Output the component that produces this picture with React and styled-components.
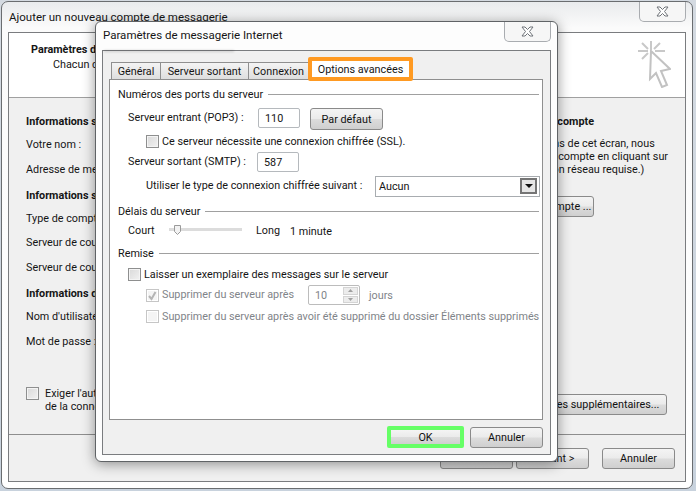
import React from 'react';
import styled, { createGlobalStyle } from 'styled-components';

const GlobalStyle = createGlobalStyle`
    html, body {
        margin: 0;
        padding: 0;
    }
    body {
        font-family: Roboto, "Noto Sans", sans-serif;
        font-size: 10.8px;
        color: #151515;
    }
`;

const CloseIcon = () => (
    <svg width="13" height="11" viewBox="0 0 13 11">
        <path d="M1 1h3l2.500 2.500L9 1h3L8.500 5.500 12 10H9L6.500 7.500 4 10H1l3.500-4.500z" fill="#fff" stroke="#6f7378" strokeWidth="1" />
    </svg>
);

const ClickIcon = () => (
    <svg width="33" height="47" viewBox="0 0 33 47" fill="none">
        <path d="M13 10l19 18-9 2 6 14-5 2-6-14-6 6z" fill="#fff" stroke="#c2c2c2" strokeWidth="2" />
        <path d="M13 0v9M0 10h10M4 2l6 6M22 2l-6 6M4 18l6-6M17 10h10" stroke="#c8c8c8" strokeWidth="2" />
    </svg>
);

const Caret = () => (
    <svg width="8" height="4" viewBox="0 0 8 4">
        <path d="M0 0h8l-4 4z" fill="#111" />
    </svg>
);

const Tick = () => (
    <svg width="11" height="11" viewBox="0 0 11 11" fill="none">
        <path d="M2 6l2.500 3 4-7" stroke="#b4b4b4" strokeWidth="2" />
    </svg>
);

const Thumb = () => (
    <svg width="7" height="10" viewBox="0 0 7 10">
        <path d="M.5.5h6v6l-3 3-3-3z" fill="#f2f2f2" stroke="#9a9a9a" />
    </svg>
);

const SpinGlyph = ({ down }) => (
    <svg width="5" height="3" viewBox="0 0 5 3">
        <path d={down ? 'M0 0h5L2.500 3z' : 'M0 3h5L2.500 0z'} fill="#a0a0a0" />
    </svg>
);

const Page = styled.div`
    position: relative;
    width: 696px;
    height: 491px;
    overflow: hidden;
    background: linear-gradient(#d4dae1, #c8d2dd);
    padding: 1px 3px 2px 1px;
    box-sizing: border-box;
`;

const Window = styled.div`
    height: 100%;
    box-sizing: border-box;
    display: flex;
    flex-direction: column;
    border: 1px solid #6a6d70;
    border-radius: 7px;
    background: linear-gradient(#e9ebed, #fbfbfb 26px, #fff);
    padding: 0 6px 6px;
`;

const Dialog = styled.div`
    position: absolute;
    left: 95px;
    top: 21px;
    width: 463px;
    height: 441px;
    box-sizing: border-box;
    display: flex;
    flex-direction: column;
    border: 1px solid #606366;
    border-radius: 6px;
    background: #fdfdfd;
    box-shadow: 0 2px 13px rgba(0, 0, 0, 0.42);
    padding: 0 6px 6px;
`;

const TitleBar = styled.div`
    display: flex;
    justify-content: space-between;
    align-items: flex-start;
    flex: none;
    height: ${(p) => p.$h}px;
`;

const Title = styled.div`
    position: relative;
    font-size: 11.5px;
    white-space: nowrap;
    padding: ${(p) => p.$top}px 0 0 ${(p) => p.$left}px;
`;

// the blurred reflection that the glass frame leaves under the dialog's title
const TitleGlare = styled.div`
    position: absolute;
    left: 2px;
    bottom: -10px;
    width: 130px;
    height: 2px;
    background: rgba(0, 0, 0, 0.14);
    filter: blur(1.2px);
`;

const CloseButton = styled.div`
    width: 47px;
    height: 20px;
    box-sizing: border-box;
    display: flex;
    align-items: center;
    justify-content: center;
    border: 1px solid #a9acb0;
    border-top: none;
    border-radius: 0 0 5px 5px;
    background: #f6f6f6;
`;

const Client = styled.div`
    flex: 1;
    display: flex;
    flex-direction: column;
    border: 1px solid #7a7c7f;
    background: #f0f0f0;
    min-height: 0;
`;

const Header = styled.div`
    position: relative;
    flex: none;
    height: 65px;
    background: #fff;
    border-bottom: 1px solid #a0a0a0;
    padding: 10px 0 0 22px;
    box-sizing: border-box;
`;

const HeaderTitle = styled.div`
    font-weight: 700;
    white-space: nowrap;
`;

const HeaderText = styled.div`
    padding: 2px 0 0 22px;
    white-space: nowrap;
`;

const HeaderIcon = styled.div`
    position: absolute;
    right: 14px;
    top: 8px;
`;

const Body = styled.div`
    flex: 1;
    display: flex;
    justify-content: space-between;
    padding: 15px 18px 0 17px;
    min-height: 0;
`;

const Column = styled.div`
    display: flex;
    flex-direction: column;
    align-items: ${(p) => (p.$end ? 'flex-end' : 'flex-start')};
    white-space: nowrap;
`;

const Line = styled.div`
    display: flex;
    align-items: center;
    height: ${(p) => p.$h || 16}px;
    margin-top: ${(p) => p.$mt || 0}px;
    margin-right: ${(p) => p.$mr || 0}px;
    font-weight: ${(p) => (p.$bold ? 700 : 400)};
`;

const Note = styled.div`
    line-height: 13px;
    margin-top: ${(p) => p.$mt || 0}px;
    margin-right: -1px;
`;

const CheckLines = styled.div`
    line-height: 13px;
    padding-left: 3px;
`;

const Footer = styled.div`
    flex: none;
    height: 47px;
    box-sizing: border-box;
    border-top: 1px solid #8e8e8e;
    display: flex;
    justify-content: flex-end;
    align-items: flex-start;
    padding: 13px 10px 0 0;
    gap: 3px;
`;

const Button = styled.div`
    height: ${(p) => p.$h || 21}px;
    width: ${(p) => p.$w}px;
    flex: none;
    box-sizing: border-box;
    display: flex;
    align-items: center;
    justify-content: center;
    border: 1px solid #8a8a8a;
    border-radius: 3px;
    background: linear-gradient(#f4f4f4, #ebebeb 48%, #dcdcdc 52%, #cfcfcf);
    color: #111;
    margin-left: ${(p) => p.$ml || 0}px;
    margin-right: ${(p) => p.$mr || 0}px;
    margin-top: ${(p) => p.$mt || 0}px;
    white-space: nowrap;
`;

const TabStrip = styled.div`
    display: flex;
    flex: none;
    height: 18px;
    padding-left: 8px;
    margin-top: 10px;
    position: relative;
    z-index: 1;
    align-items: flex-end;
`;

const Tab = styled.div`
    height: 17px;
    box-sizing: border-box;
    border: 1px solid #8f8f8f;
    border-bottom: none;
    border-right: none;
    background: linear-gradient(#f4f4f4, #dedede);
    display: flex;
    align-items: center;
    white-space: nowrap;
    width: ${(p) => p.$w}px;
    justify-content: center;
`;

const ActiveTab = styled.div`
    position: relative;
    width: 105px;
    height: 24px;
    margin-bottom: -2px;
    box-sizing: border-box;
    border: 4px solid #ff9a22;
    border-radius: 2px;
    background: #fff;
    display: flex;
    align-items: center;
    justify-content: center;
    white-space: nowrap;
`;

const Pane = styled.div`
    flex: none;
    height: 341px;
    margin: 0 7px 0 6px;
    box-sizing: border-box;
    border: 1px solid #8f8f8f;
    background: #fff;
    padding: 6px 3px 0 8px;
`;

const SectionTitle = styled.div`
    display: flex;
    align-items: center;
    gap: 5px;
    height: 16px;
    margin-top: ${(p) => p.$mt || 0}px;
    white-space: nowrap;
    &::after {
        content: '';
        flex: 1;
        border-top: 1px solid #a0a0a0;
    }
`;

const Row = styled.div`
    display: flex;
    align-items: ${(p) => (p.$top ? 'flex-start' : 'center')};
    height: ${(p) => p.$h}px;
    margin-top: ${(p) => p.$mt}px;
    padding-left: ${(p) => p.$indent}px;
    white-space: nowrap;
    color: ${(p) => (p.$disabled ? '#7f8489' : 'inherit')};
`;

const Label = styled.div`
    width: ${(p) => (p.$w ? `${p.$w}px` : 'auto')};
    flex: none;
    line-height: ${(p) => p.$lh || 20}px;
`;

const Input = styled.div`
    width: ${(p) => p.$w}px;
    height: 20px;
    flex: none;
    box-sizing: border-box;
    border: 1px solid #b5b9bd;
    border-radius: 2px;
    background: #fff;
    display: flex;
    align-items: center;
    padding-left: 6px;
`;

const Box = styled.div`
    width: 13px;
    height: 13px;
    flex: none;
    box-sizing: border-box;
    border: 1px solid ${(p) => (p.$disabled ? '#c6c6c6' : '#8e8f8f')};
    background: ${(p) => (p.$disabled ? '#f4f4f4' : 'linear-gradient(135deg, #d9d9d9, #f2f2f2)')};
    box-shadow: inset 0 0 0 1px ${(p) => (p.$disabled ? '#fff' : '#f4f4f4')};
    margin-right: 3px;
    display: flex;
    align-items: center;
    justify-content: center;
`;

const Select = styled.div`
    width: 165px;
    height: 21px;
    box-sizing: border-box;
    flex: none;
    border: 1px solid #a8acb0;
    margin-left: 9px;
    display: flex;
    align-items: center;
    justify-content: space-between;
    padding: 0 2px 0 3px;
`;

const SelectArrow = styled.div`
    width: 17px;
    height: 16px;
    box-sizing: border-box;
    border: 2px solid #757575;
    background: #e6e6e6;
    display: flex;
    align-items: center;
    justify-content: center;
`;

const Slider = styled.div`
    position: relative;
    width: 73px;
    height: 3px;
    flex: none;
    margin: -4px 14px 0 10px;
    box-sizing: border-box;
    background: #dcdcdc;
`;

const SliderThumb = styled.div`
    position: absolute;
    left: 5px;
    top: -3px;
    line-height: 0;
`;

const Spinner = styled.div`
    width: 52px;
    height: 20px;
    flex: none;
    box-sizing: border-box;
    border: 1px solid #bcbcbc;
    border-radius: 2px;
    margin-right: 9px;
    display: flex;
    align-items: center;
    justify-content: space-between;
    padding: 1px 1px 1px 6px;
`;

const SpinArrows = styled.div`
    width: 15px;
    height: 16px;
    display: flex;
    flex-direction: column;
    gap: 1px;
`;

const SpinButton = styled.div`
    flex: 1;
    display: flex;
    align-items: center;
    justify-content: center;
    background: #ececec;
    border: 1px solid #d4d4d4;
`;

const DialogButtons = styled.div`
    flex: 1;
    display: flex;
    justify-content: flex-end;
    align-items: center;
    gap: 6px;
    padding-right: 7px;
`;

const OkButton = styled(Button)`
    width: 77px;
    height: 22px;
    border: 4px solid #66ff66;
    border-radius: 2px;
`;

const App = () => {
    return (
        <Page>
            <GlobalStyle />
            <Window>
                <TitleBar $h={30}>
                    <Title $top={8} $left={1}>Ajouter un nouveau compte de messagerie</Title>
                    <CloseButton><CloseIcon /></CloseButton>
                </TitleBar>
                <Client>
                    <Header>
                        <HeaderTitle>Paramètres de messagerie Internet</HeaderTitle>
                        <HeaderText>Chacun de ces paramètres est obligatoire au fonctionnement de votre compte.</HeaderText>
                        <HeaderIcon><ClickIcon /></HeaderIcon>
                    </Header>
                    <Body>
                        <Column>
                            <Line $bold>Informations sur l'utilisateur</Line>
                            <Line $mt={7}>Votre nom :</Line>
                            <Line $mt={9}>Adresse de messagerie :</Line>
                            <Line $bold $mt={10}>Informations sur le serveur</Line>
                            <Line $mt={7}>Type de compte :</Line>
                            <Line $mt={8}>Serveur de courrier entrant :</Line>
                            <Line $mt={9}>Serveur de courrier sortant (SMTP) :</Line>
                            <Line $bold $mt={10}>Informations de connexion</Line>
                            <Line $mt={7}>Nom d'utilisateur :</Line>
                            <Line $mt={9}>Mot de passe :</Line>
                            <Row $top $h={26} $mt={38} $indent={0}>
                                <Box />
                                <CheckLines>Exiger l'authentification par mot de passe<br />de la connexion sécurisée (SPA)</CheckLines>
                            </Row>
                        </Column>
                        <Column $end>
                            <Line $bold $mr={73}>Test des paramètres du compte</Line>
                            <Note $mt={8}>
                                Après avoir complété les informations de cet écran, nous<br />
                                vous recommandons de tester votre compte en cliquant sur<br />
                                le bouton Test du compte. (Connexion réseau requise.)
                            </Note>
                            <Button $w={100} $mt={20} $mr={73}>Tester ce compte ...</Button>
                            <Button $w={162} $mt={177}>Paramètres supplémentaires...</Button>
                        </Column>
                    </Body>
                    <Footer>
                        <Button $w={73}>&lt; Précédent</Button>
                        <Button $w={73}>Suivant &gt;</Button>
                        <Button $w={73} $ml={10}>Annuler</Button>
                    </Footer>
                </Client>
            </Window>
            <Dialog>
                <TitleBar $h={28}>
                    <Title $top={6} $left={1}>
                        Paramètres de messagerie Internet
                        <TitleGlare />
                    </Title>
                    <CloseButton><CloseIcon /></CloseButton>
                </TitleBar>
                <Client>
                    <TabStrip>
                        <Tab $w={49}>Général</Tab>
                        <Tab $w={88}>Serveur sortant</Tab>
                        <Tab $w={60}>Connexion</Tab>
                        <ActiveTab>Options avancées</ActiveTab>
                    </TabStrip>
                    <Pane>
                        <SectionTitle>Numéros des ports du serveur</SectionTitle>
                        <Row $h={22} $mt={6} $indent={10} $top>
                            <Label $w={130}>Serveur entrant (POP3) :</Label>
                            <Input $w={42}>110</Input>
                            <Button $w={73} $h={22} $ml={10}>Par défaut</Button>
                        </Row>
                        <Row $h={18} $mt={2} $indent={28}>
                            <Box />Ce serveur nécessite une connexion chiffrée (SSL).
                        </Row>
                        <Row $h={20} $mt={2} $indent={10} $top>
                            <Label $w={129}>Serveur sortant (SMTP) :</Label>
                            <Input $w={42}>587</Input>
                        </Row>
                        <Row $h={22} $mt={3} $indent={28}>
                            <Label $w={220}>Utiliser le type de connexion chiffrée suivant :</Label>
                            <Select>Aucun<SelectArrow><Caret /></SelectArrow></Select>
                        </Row>
                        <SectionTitle $mt={6}>Délais du serveur</SectionTitle>
                        <Row $h={18} $mt={3} $indent={10}>
                            <Label $w={31}>Court</Label>
                            <Slider><SliderThumb><Thumb /></SliderThumb></Slider>
                            <Label $w={34}>Long</Label>
                            1 minute
                        </Row>
                        <SectionTitle $mt={5}>Remise</SectionTitle>
                        <Row $h={18} $mt={4} $indent={10}>
                            <Box />Laisser un exemplaire des messages sur le serveur
                        </Row>
                        <Row $h={20} $mt={2} $indent={28} $disabled>
                            <Box $disabled><Tick /></Box>
                            <Label $w={146}>Supprimer du serveur après</Label>
                            <Spinner>
                                10
                                <SpinArrows>
                                    <SpinButton><SpinGlyph /></SpinButton>
                                    <SpinButton><SpinGlyph down /></SpinButton>
                                </SpinArrows>
                            </Spinner>
                            jours
                        </Row>
                        <Row $h={18} $mt={2} $indent={28} $disabled>
                            <Box $disabled />Supprimer du serveur après avoir été supprimé du dossier Éléments supprimés
                        </Row>
                    </Pane>
                    <DialogButtons>
                        <OkButton>OK</OkButton>
                        <Button $w={73}>Annuler</Button>
                    </DialogButtons>
                </Client>
            </Dialog>
        </Page>
    );
};

export default App;
